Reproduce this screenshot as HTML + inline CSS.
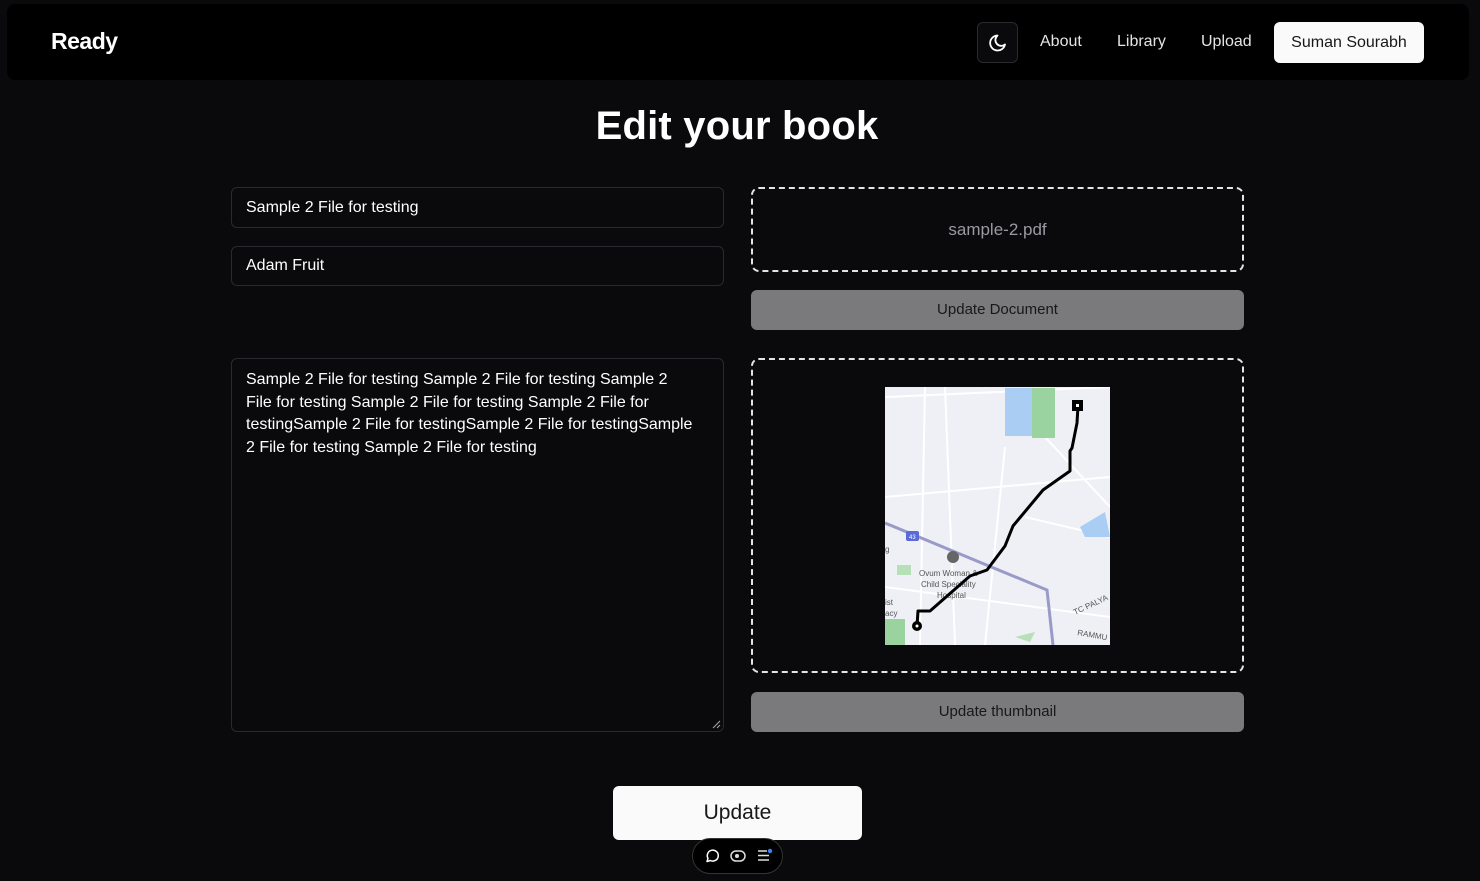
<!DOCTYPE html>
<html><head><meta charset="utf-8"><style>
*{box-sizing:border-box;margin:0;padding:0}
body{width:1480px;height:881px;background:#0a0a0c;font-family:"Liberation Sans",sans-serif;color:#fff;position:relative;overflow:hidden}
.hdr{position:absolute;left:7px;top:4px;width:1462px;height:76px;background:#000;border-radius:8px}
.logo{position:absolute;left:44px;top:24px;font-size:23px;font-weight:bold;letter-spacing:-0.5px}
.moon{position:absolute;left:970px;top:18px;width:41px;height:41px;border:1px solid #2a2a2e;border-radius:6px;background:#0a0a0c}
.nav{position:absolute;top:29px;font-size:16px;color:#e4e4e7}
.user{position:absolute;left:1267px;top:18px;width:150px;height:41px;background:#fafafa;border-radius:6px;color:#18181b;font-size:16px;text-align:center;line-height:41px}
h1{position:absolute;left:0;width:1474px;top:104px;text-align:center;font-size:40px;font-weight:bold;letter-spacing:0.2px}
.inp{position:absolute;left:231px;width:493px;border:1px solid #2a2a2e;border-radius:6px;font-size:16px;padding-left:14px}
.dash{position:absolute;left:751px;width:493px;border:2px dashed #e4e4e7;border-radius:8px}
.btn{position:absolute;left:751px;width:493px;height:40px;background:#7a7a7c;border-radius:6px;color:#18181b;font-size:15px;text-align:center;line-height:40px}
</style></head><body>
<div class="hdr">
<div class="logo">Ready</div>
<div class="moon"><svg width="41" height="41" viewBox="0 0 41 41"><path d="M27 21.5A7.5 7.5 0 1 1 19.5 12.5a5.8 5.8 0 0 0 7.5 9z" fill="none" stroke="#fff" stroke-width="1.8" stroke-linejoin="round"/></svg></div>
<div class="nav" style="left:1033px">About</div>
<div class="nav" style="left:1110px">Library</div>
<div class="nav" style="left:1194px">Upload</div>
<div class="user">Suman Sourabh</div>
</div>
<h1>Edit your book</h1>
<div class="inp" style="top:187px;height:41px;line-height:39px">Sample 2 File for testing</div>
<div class="inp" style="top:246px;height:40px;line-height:38px">Adam Fruit</div>
<div class="inp" style="top:358px;height:374px;padding:10px 30px 10px 14px;line-height:22.5px;font-size:16px">Sample 2 File for testing Sample 2 File for testing Sample 2 File for testing Sample 2 File for testing Sample 2 File for testingSample 2 File for testingSample 2 File for testingSample 2 File for testing Sample 2 File for testing
<svg style="position:absolute;right:2px;bottom:2px" width="9" height="9"><path d="M1 8L8 1M5 8L8 5" stroke="#aaa" stroke-width="1"/></svg></div>
<div class="dash" style="top:187px;height:85px;text-align:center;line-height:81px;color:#9a9aa0;font-size:17px">sample-2.pdf</div>
<div class="btn" style="top:290px">Update Document</div>
<div class="dash" style="top:358px;height:315px"></div>
<svg style="position:absolute;left:885px;top:387px" width="225" height="258" viewBox="0 0 225 258">
<rect width="225" height="258" fill="#eef0f6"/>
<g stroke="#fff" stroke-width="2" fill="none">
<path d="M0 10L225 0M40 0L35 258M120 60L100 258M0 110L225 90M140 130L225 150M0 200L225 230M160 50L225 120M60 0L70 258"/></g>
<rect x="120" y="1" width="27" height="48" fill="#a9cdf3"/>
<rect x="147" y="1" width="23" height="50" fill="#9bd3a0"/>
<path d="M195 140L220 125L225 150L200 150Z" fill="#a9cdf3"/>
<rect x="0" y="232" width="20" height="26" fill="#9bd3a0"/>
<rect x="12" y="178" width="14" height="10" fill="#b5e0b8"/>
<path d="M130 250L150 245L145 255Z" fill="#b5e0b8"/>
<path d="M0 136L162 203L168 258" stroke="#9a9ac8" stroke-width="3" fill="none"/>
<rect x="21" y="144" width="13" height="10" rx="2" fill="#5a6ad8"/>
<text x="24" y="152" font-size="6" fill="#fff">43</text>
<circle cx="68" cy="170" r="6" fill="#666"/>
<g font-size="8" fill="#555"><text x="34" y="189">Ovum Woman &amp;</text><text x="36" y="200">Child Speciality</text><text x="52" y="211">Hospital</text><text x="0" y="218">ist</text><text x="0" y="229">acy</text><text x="0" y="165">g</text>
<text x="190" y="228" transform="rotate(-25 190 228)">TC PALYA</text><text x="192" y="248" transform="rotate(10 192 248)">RAMMU</text></g>
<path d="M193 19L192 36L187 61L185 64L185 84L158 103L128 139L120 159L102 183L85 189L45 224L33 224L32 239" stroke="#000" stroke-width="3" fill="none" stroke-linejoin="round"/>
<rect x="187" y="13" width="11" height="11" fill="#000"/><rect x="191" y="17" width="3" height="3" fill="#fff"/>
<circle cx="32" cy="239" r="5" fill="#000"/><circle cx="32" cy="239" r="1.5" fill="#fff"/>
</svg>
<div class="btn" style="top:692px">Update thumbnail</div>
<div style="position:absolute;left:613px;top:786px;width:249px;height:54px;background:#fafafa;border-radius:6px;color:#18181b;font-size:21px;text-align:center;line-height:54px">Update</div>
<div style="position:absolute;left:692px;top:838px;width:91px;height:36px;background:#000;border:1px solid #333;border-radius:18px">
<svg width="91" height="36"><path d="M14 22.5l1-3.2a5.5 5.5 0 1 1 2.3 2.2z" fill="none" stroke="#fff" stroke-width="1.5" stroke-linejoin="round"/>
<rect x="38" y="12" width="14" height="10" rx="5" fill="none" stroke="#ddd" stroke-width="1.5"/><circle cx="44" cy="17" r="2" fill="#ddd"/>
<path d="M65 12h9M65 16.5h11M65 21h11" stroke="#ddd" stroke-width="1.6"/><circle cx="77" cy="12" r="2.2" fill="#3b82f6"/></svg></div>
</body></html>
